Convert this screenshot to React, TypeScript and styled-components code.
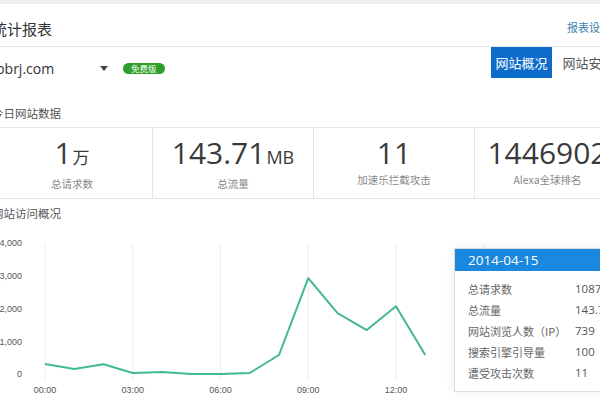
import React from 'react';
import styled, { createGlobalStyle } from 'styled-components';

const GlobalStyle = createGlobalStyle`
  html, body {
    margin: 0;
    padding: 0;
    background: #fff;
    overflow: hidden;
  }
  body {
    font-family: 'Noto Sans CJK SC', 'Noto Sans', sans-serif;
  }
`;

const Page = styled.div`
  width: 600px;
  height: 400px;
  overflow: hidden;
  background: #fff;
`;

const TopStrip = styled.div`
  height: 4px;
  background: #eeeeef;
`;

const Header = styled.div`
  height: 43px;
  box-sizing: border-box;
  padding-top: 6px;
  display: flex;
  align-items: center;
  justify-content: space-between;
  border-bottom: 1px solid #e9e9e9;
`;

const Title = styled.h1`
  margin: 0 0 0 -8px;
  font-size: 15px;
  font-weight: 400;
  color: #333;
  white-space: nowrap;
`;

const SettingsLink = styled.a`
  margin: -3px -11px 0 0;
  font-size: 11px;
  color: #3b82ad;
  white-space: nowrap;
  text-decoration: none;
`;

const SiteBar = styled.div`
  height: 32px;
  display: flex;
`;

const SiteGroup = styled.div`
  flex: 0 0 491px;
  box-sizing: border-box;
  padding-top: 11px;
  display: flex;
  align-items: center;
  height: 100%;
`;

const Domain = styled.span`
  width: 104px;
  margin-left: -4px;
  font-family: 'Open Sans', 'Noto Sans', sans-serif;
  font-size: 14px;
  color: #333;
  line-height: 22px;
`;

const Caret = styled.span`
  width: 0;
  height: 0;
  border-left: 4.5px solid transparent;
  border-right: 4.5px solid transparent;
  border-top: 5px solid #444;
`;

const Badge = styled.span`
  margin-left: 15px;
  height: 11px;
  padding: 0 8px;
  border-radius: 6px;
  background: #2f9f2a;
  color: #fff;
  font-size: 8.5px;
  line-height: 11px;
  white-space: nowrap;
`;

const Tabs = styled.div`
  display: flex;
  flex: none;
  white-space: nowrap;
`;

const Tab = styled.div<{ $active?: boolean }>`
  height: 31px;
  padding: 0 4.5px;
  margin-right: ${(p) => (p.$active ? '6px' : '0')};
  display: flex;
  align-items: center;
  font-size: 13px;
  background: ${(p) => (p.$active ? '#0d6cc9' : 'transparent')};
  color: ${(p) => (p.$active ? '#fff' : '#555')};
`;

const SectionTitle = styled.h2<{ $top: number }>`
  margin: ${(p) => p.$top}px 0 0 -8px;
  font-size: 11.5px;
  line-height: 16px;
  font-weight: 400;
  color: #555;
  white-space: nowrap;
`;

const StatsRow = styled.div`
  margin: 6px 0 0 -8px;
  display: flex;
  height: 72px;
  box-sizing: border-box;
  border-top: 1px solid #e6e6e6;
  border-bottom: 1px solid #e6e6e6;
`;

const StatCell = styled.div<{ $w: number }>`
  flex: 0 0 ${(p) => p.$w}px;
  box-sizing: border-box;
  border-right: 1px solid #e6e6e6;
  padding-top: 8px;
  display: flex;
  flex-direction: column;
  align-items: center;
  white-space: nowrap;
`;

const StatValue = styled.div`
  font-family: 'Open Sans', 'Noto Sans', sans-serif;
  font-size: 30px;
  line-height: 34px;
  color: #3a3a3a;
`;

const StatUnit = styled.span<{ $cjk?: boolean }>`
  font-family: ${(p) => (p.$cjk ? "'Noto Sans CJK SC', sans-serif" : "'Open Sans', sans-serif")};
  font-size: ${(p) => (p.$cjk ? '17px' : '18px')};
  margin-left: 1px;
`;

const StatLabel = styled.div`
  margin-top: 3px;
  font-size: 10.5px;
  line-height: 14px;
  color: #888;
`;

const ChartArea = styled.div`
  position: relative;
  margin-top: 5px;
  height: 175px;
`;

const Tooltip = styled.div`
  position: absolute;
  left: 454px;
  top: 22px;
  width: 180px;
  background: #fff;
  border: 1px solid #dcdcdc;
  box-shadow: 0 0 10px rgba(0, 0, 0, 0.07);
`;

const TooltipHead = styled.div`
  height: 22px;
  background: #1a88df;
  color: #fff;
  font-family: 'Open Sans', 'Noto Sans', sans-serif;
  font-size: 13.5px;
  line-height: 22px;
  padding-left: 13px;
`;

const TooltipBody = styled.div`
  padding: 7px 0 8px 13px;
`;

const TooltipRow = styled.div`
  display: grid;
  grid-template-columns: 107px auto;
  height: 21px;
  align-items: center;
  font-size: 11px;
  color: #666;
  white-space: nowrap;
`;

const TooltipValue = styled.span`
  font-family: 'Open Sans', 'Noto Sans', sans-serif;
  font-size: 11.5px;
  color: #555;
`;

const stats = [
  { value: '1', unit: '万', cjk: true, label: '总请求数', w: 161 },
  { value: '143.71', unit: 'MB', label: '总流量', w: 161 },
  { value: '11', label: '加速乐拦截攻击', w: 161 },
  { value: '1446902', label: 'Alexa全球排名', w: 146 },
];

const hourly = [340, 180, 330, 60, 90, 30, 30, 60, 610, 2960, 1890, 1370, 2100, 610];

const tipRows = [
  ['总请求数', '10876'],
  ['总流量', '143.71MB'],
  ['网站浏览人数（IP）', '739'],
  ['搜索引擎引导量', '100'],
  ['遭受攻击次数', '11'],
];

const X0 = 45;
const STEP = 29.25;
const Y0 = 149;
const SCALE = 131 / 4000;

function VisitChart() {
  const pts = hourly.map((v, i) => `${X0 + i * STEP},${(Y0 - v * SCALE).toFixed(1)}`).join(' ');
  return (
    <svg width="600" height="175" viewBox="0 0 600 175">
      {[0, 3, 6, 9, 12, 15].map((h) => (
        <line key={h} x1={X0 + h * STEP} x2={X0 + h * STEP} y1={18} y2={155} stroke="#ededed" strokeWidth={1} />
      ))}
      {[4000, 3000, 2000, 1000, 0].map((v) => (
        <text
          key={v}
          x={22}
          y={Y0 - v * SCALE}
          textAnchor="end"
          dominantBaseline="middle"
          fontFamily="'Liberation Sans', Arial, sans-serif"
          fontSize={9}
          fill="#555"
        >
          {v.toLocaleString('en-US')}
        </text>
      ))}
      {['00:00', '03:00', '06:00', '09:00', '12:00'].map((t, i) => (
        <text
          key={t}
          x={X0 + i * 3 * STEP}
          y={165}
          textAnchor="middle"
          dominantBaseline="middle"
          fontFamily="'Liberation Sans', Arial, sans-serif"
          fontSize={9}
          fill="#555"
        >
          {t}
        </text>
      ))}
      <polyline points={pts} fill="none" stroke="#43b98e" strokeWidth={2} strokeLinejoin="round" />
    </svg>
  );
}

export default function App() {
  return (
    <Page>
      <GlobalStyle />
      <TopStrip />
      <Header>
        <Title>统计报表</Title>
        <SettingsLink>报表设置</SettingsLink>
      </Header>
      <SiteBar>
        <SiteGroup>
          <Domain>bbrj.com</Domain>
          <Caret />
          <Badge>免费版</Badge>
        </SiteGroup>
        <Tabs>
          <Tab $active>网站概况</Tab>
          <Tab>网站安全</Tab>
        </Tabs>
      </SiteBar>
      <SectionTitle $top={26}>今日网站数据</SectionTitle>
      <StatsRow>
        {stats.map((s) => (
          <StatCell key={s.label} $w={s.w}>
            <StatValue>
              {s.value}
              {s.unit && <StatUnit $cjk={s.cjk}>{s.unit}</StatUnit>}
            </StatValue>
            <StatLabel>{s.label}</StatLabel>
          </StatCell>
        ))}
      </StatsRow>
      <SectionTitle $top={6}>网站访问概况</SectionTitle>
      <ChartArea>
        <VisitChart />
        <Tooltip>
          <TooltipHead>2014-04-15</TooltipHead>
          <TooltipBody>
            {tipRows.map(([k, v]) => (
              <TooltipRow key={k}>
                <span>{k}</span>
                <TooltipValue>{v}</TooltipValue>
              </TooltipRow>
            ))}
          </TooltipBody>
        </Tooltip>
      </ChartArea>
    </Page>
  );
}
